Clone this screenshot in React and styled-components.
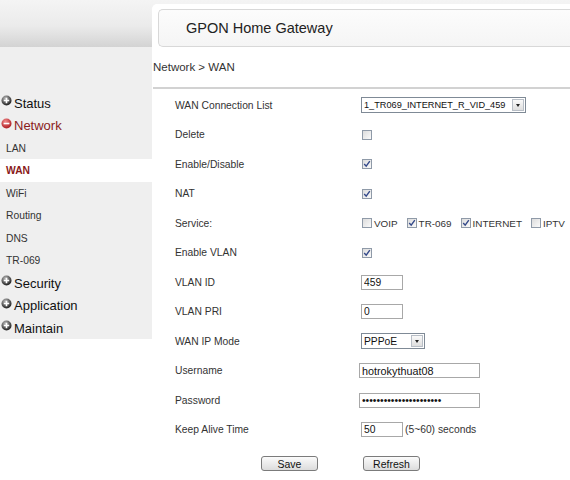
import styled, { createGlobalStyle } from "styled-components";

const GlobalStyle = createGlobalStyle`
  html, body {
    margin: 0;
    padding: 0;
    background: #fff;
    font-family: "Liberation Sans", Arial, sans-serif;
  }
`;

const Page = styled.div`
  display: grid;
  grid-template-columns: 152px 1fr;
  width: 570px;
  height: 480px;
  overflow: hidden;
  background: linear-gradient(#f4f4f4 0%, #ebebeb 55%, #d3d3d3 100%) top / 100% 47px no-repeat, #fff;
`;

const LeftCol = styled.div`
  display: flex;
  flex-direction: column;
  padding-top: 47px;
`;

const Sidebar = styled.nav`
  background: #efefef;
  padding-top: 44.75px;
  display: flex;
  flex-direction: column;
`;

const MenuGroup = styled.div`
  display: flex;
  align-items: center;
  height: 22.5px;
  padding-left: 1px;
  font-size: 13px;
  color: ${(p) => (p.open ? "#8a1d1d" : "#111")};
  svg {
    margin-right: 2px;
    margin-bottom: 5px;
    flex-shrink: 0;
  }
`;

const SubItem = styled.div`
  display: flex;
  align-items: center;
  height: 22.5px;
  padding-left: 6px;
  font-size: 10.3px;
  font-weight: ${(p) => (p.active ? "bold" : "normal")};
  color: ${(p) => (p.active ? "#8a1a1a" : "#333")};
  background: ${(p) => (p.active ? "#fff" : "transparent")};
`;

const Main = styled.main`
  margin-top: 4px;
  background: #fff;
  border-top-left-radius: 5px;
  display: flex;
  flex-direction: column;
  min-width: 0;
`;

const TitleBox = styled.div`
  margin: 5px 0 0 6px;
  height: 38px;
  box-sizing: border-box;
  border: 1px solid #d8d8d8;
  border-right: none;
  border-radius: 5px 0 0 5px;
  background: linear-gradient(#fcfcfc, #f5f5f5);
  display: flex;
  align-items: center;
  padding-left: 27px;
  font-size: 14.5px;
  color: #222;
`;

const Breadcrumb = styled.div`
  height: 40px;
  display: flex;
  align-items: center;
  padding-left: 1px;
  font-size: 11.5px;
  color: #333;
`;

const Rule = styled.div`
  height: 2px;
  background: #d2d2d2;
  margin-left: 1px;
`;

const Form = styled.div`
  padding-top: 1.25px;
  display: flex;
  flex-direction: column;
`;

const Row = styled.div`
  display: grid;
  grid-template-columns: 186px auto;
  align-items: center;
  height: 29.5px;
  padding-left: 23px;
  font-size: 10.3px;
  color: #333;
  white-space: nowrap;
`;

const Value = styled.div`
  display: flex;
  align-items: center;
  gap: ${(p) => p.gap || 0}px;
  margin-left: ${(p) => p.shift || 0}px;
`;

const Option = styled.span`
  display: inline-flex;
  align-items: center;
  gap: 2px;
  flex-shrink: 0;
  white-space: nowrap;
  font-size: 9.9px;
`;

const Box = styled.span`
  display: inline-flex;
  align-items: center;
  justify-content: center;
  flex-shrink: 0;
  width: 10px;
  height: 10px;
  box-sizing: border-box;
  margin-left: 1px;
  border: 1px solid #8f9aa8;
  background: linear-gradient(135deg, #dcdcdc, #fafafa);
`;

const Select = styled.div`
  display: inline-flex;
  align-items: center;
  justify-content: space-between;
  width: ${(p) => p.w}px;
  height: 16px;
  box-sizing: border-box;
  border: 1px solid #7f8a96;
  background: #fff;
  padding-left: 2px;
  font-size: ${(p) => p.fs || 10.3}px;
  color: #111;
`;

const Arrow = styled.span`
  width: 12px;
  height: 12px;
  margin-right: 1px;
  box-sizing: border-box;
  border: 1px solid #b8bec6;
  background: linear-gradient(#fafafa, #dedede);
  display: flex;
  align-items: center;
  justify-content: center;
  &::after {
    content: "";
    border-left: 2.5px solid transparent;
    border-right: 2.5px solid transparent;
    border-top: 3px solid #222;
  }
`;

const Input = styled.input`
  width: ${(p) => p.w}px;
  height: 15px;
  box-sizing: border-box;
  border: 1px solid #a8a8a8;
  padding: 0 2px;
  margin: 0;
  font-family: "Liberation Sans", Arial, sans-serif;
  font-size: ${(p) => p.fs || 10.3}px;
  color: #111;
  background: #fff;
  outline: none;
`;

const Hint = styled.span`
  margin-left: 2px;
`;

const ButtonRow = styled.div`
  display: flex;
  gap: 45px;
  padding: 12px 0 0 109px;
`;

const Button = styled.button`
  width: 57px;
  height: 15px;
  padding: 0;
  box-sizing: border-box;
  border: 1px solid #7b7b7b;
  border-radius: 3px;
  background: linear-gradient(#fbfbfb, #dcdcdc);
  font-family: "Liberation Sans", Arial, sans-serif;
  font-size: 10.5px;
  color: #111;
`;

const PlusIcon = ({ minus }) => (
  <svg width="11" height="11" viewBox="0 0 11 11">
    <defs>
      <radialGradient id={minus ? "gm" : "gp"} cx="40%" cy="30%" r="70%">
        <stop offset="0" stopColor={minus ? "#f08a8a" : "#bbb"} />
        <stop offset="1" stopColor={minus ? "#b01c22" : "#1e1e1e"} />
      </radialGradient>
    </defs>
    <circle cx="5.5" cy="5.5" r="5" fill={`url(#${minus ? "gm" : "gp"})`} />
    <path
      d={minus ? "M2.6 5.5h5.8" : "M2.8 5.5h5.4M5.5 2.8v5.4"}
      stroke="#fff"
      strokeWidth="1.6"
    />
  </svg>
);

const Check = ({ checked }) => (
  <Box>
    {checked && (
      <svg width="8" height="8" viewBox="0 0 8 8">
        <path d="M1.2 4l2 2.2L6.8 1.2" fill="none" stroke="#34498a" strokeWidth="1.4" />
      </svg>
    )}
  </Box>
);

const Field = ({ label, children }) => (
  <Row>
    <span>{label}</span>
    {children}
  </Row>
);

export default function App() {
  return (
    <>
      <GlobalStyle />
      <Page>
        <LeftCol>
          <Sidebar>
            <MenuGroup>
              <PlusIcon />
              Status
            </MenuGroup>
            <MenuGroup open>
              <PlusIcon minus />
              Network
            </MenuGroup>
            <SubItem>LAN</SubItem>
            <SubItem active>WAN</SubItem>
            <SubItem>WiFi</SubItem>
            <SubItem>Routing</SubItem>
            <SubItem>DNS</SubItem>
            <SubItem>TR-069</SubItem>
            <MenuGroup>
              <PlusIcon />
              Security
            </MenuGroup>
            <MenuGroup>
              <PlusIcon />
              Application
            </MenuGroup>
            <MenuGroup>
              <PlusIcon />
              Maintain
            </MenuGroup>
          </Sidebar>
        </LeftCol>
        <Main>
          <TitleBox>GPON Home Gateway</TitleBox>
          <Breadcrumb>Network &gt; WAN</Breadcrumb>
          <Rule />
          <Form>
            <Field label="WAN Connection List">
              <Value>
                <Select w={165} fs={9.2}>
                  1_TR069_INTERNET_R_VID_459
                  <Arrow />
                </Select>
              </Value>
            </Field>
            <Field label="Delete">
              <Value>
                <Check />
              </Value>
            </Field>
            <Field label="Enable/Disable">
              <Value>
                <Check checked />
              </Value>
            </Field>
            <Field label="NAT">
              <Value>
                <Check checked />
              </Value>
            </Field>
            <Field label="Service:">
              <Value gap={8}>
                <Option>
                  <Check />
                  VOIP
                </Option>
                <Option>
                  <Check checked />
                  TR-069
                </Option>
                <Option>
                  <Check checked />
                  INTERNET
                </Option>
                <Option>
                  <Check />
                  IPTV
                </Option>
              </Value>
            </Field>
            <Field label="Enable VLAN">
              <Value>
                <Check checked />
              </Value>
            </Field>
            <Field label="VLAN ID">
              <Value>
                <Input w={42} defaultValue="459" />
              </Value>
            </Field>
            <Field label="VLAN PRI">
              <Value>
                <Input w={42} defaultValue="0" />
              </Value>
            </Field>
            <Field label="WAN IP Mode">
              <Value>
                <Select w={64}>
                  PPPoE
                  <Arrow />
                </Select>
              </Value>
            </Field>
            <Field label="Username">
              <Value shift={-2}>
                <Input w={121} fs={10.8} defaultValue="hotrokythuat08" />
              </Value>
            </Field>
            <Field label="Password">
              <Value shift={-2}>
                <Input w={121} type="password" defaultValue="hotrokythuat08pppoe123" />
              </Value>
            </Field>
            <Field label="Keep Alive Time">
              <Value>
                <Input w={42} defaultValue="50" />
                <Hint>(5~60) seconds</Hint>
              </Value>
            </Field>
          </Form>
          <ButtonRow>
            <Button>Save</Button>
            <Button>Refresh</Button>
          </ButtonRow>
        </Main>
      </Page>
    </>
  );
}
